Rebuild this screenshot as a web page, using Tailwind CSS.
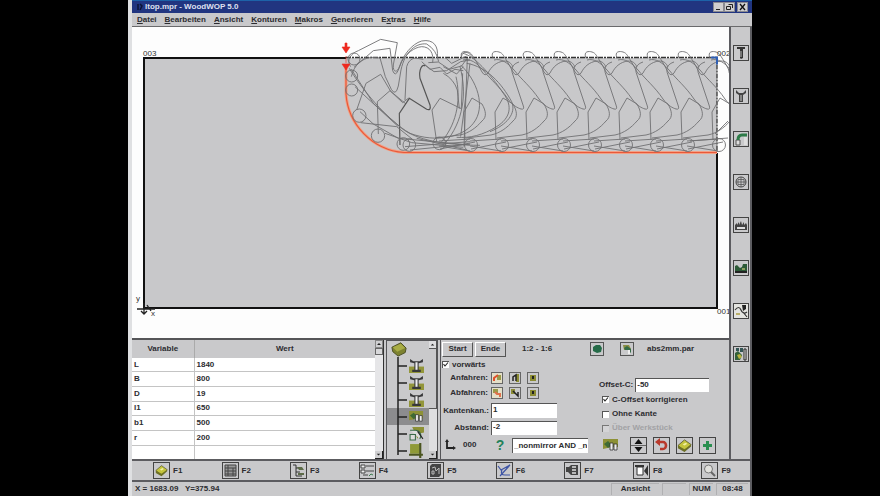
<!DOCTYPE html>
<html lang="de">
<head>
    <meta charset="UTF-8">
    <meta name="viewport" content="width=device-width, initial-scale=1.0">
    <title>ltop.mpr - WoodWOP 5.0</title>
    <script src="https://cdn.jsdelivr.net/npm/@tailwindcss/browser@4"></script>
</head>
<body class="bg-black px-32 font-['Liberation_Sans',Arial,sans-serif] text-[8px] leading-[10px] font-bold text-[#2c2c30]">

    <!-- Shared symbols -->
    <svg class="hidden" aria-hidden="true">
        <symbol id="drill" viewBox="0 0 14 14">
            <path d="M0 8h14v6H0z" fill="#93963a"/>
            <path d="M1 1l3 2h6l3-2v3l-4 1v6h2v2H3v-2h2V5L1 4z" fill="#38383a"/>
            <path d="M6 4h2v7H6z" fill="#eee"/>
        </symbol>
        <symbol id="edge" viewBox="0 0 16 14">
            <path d="M0 1h15v8H9L0 11z" fill="#8d9136"/>
            <path d="M1 6l4-3 4 4-4 3z" fill="#3f6b35"/>
            <path d="M7 5h3v7H7zM11 6h3v6h-3z" fill="#eee" stroke="#333" stroke-width=".8"/>
        </symbol>
        <symbol id="board" viewBox="0 0 16 16">
            <path d="M1 8l7-6 7 5-7 7z" fill="#c4c43c" stroke="#4d4d20" stroke-width=".8"/>
            <path d="M1 8l7 4 7-5v2l-7 6-7-4z" fill="#6d7025"/>
            <path d="M6 7l3-2 2 1-3 2z" fill="#f1efa4"/>
        </symbol>
        <symbol id="up" viewBox="0 0 8 8"><path d="M2 5l2-2 2 2z" fill="#222"/></symbol>
        <symbol id="down" viewBox="0 0 8 8"><path d="M2 3l2 2 2-2z" fill="#222"/></symbol>
        <symbol id="tick" viewBox="0 0 7 7"><path d="M1.500 3.200L3 5l3-3.500" fill="none" stroke="#222" stroke-width="1.100"/></symbol>
    </svg>

    <main class="flex h-screen flex-col border-l-4 border-[#dfe0e2] bg-[#c9c9cb]">

        <header class="flex h-[13px] shrink-0 items-center border-t border-[#1d62a8] bg-[#213580] pr-1 pl-1 text-[#dfe0f0]">
            <svg class="mr-px size-2" viewBox="0 0 8 8"><path d="M2 1v6M4 1l2 2-2 4" stroke="#0d1535" stroke-width="1.500" fill="none"/></svg>
            <h1 class="grow">ltop.mpr - WoodWOP 5.0</h1>
            <button aria-label="Minimieren" class="h-[10px] w-[11px] border border-[#8a8a90] bg-[#d0cfcf]"><svg viewBox="0 0 9 8"><path d="M2 6.500h4" stroke="#222"/></svg></button>
            <button aria-label="Wiederherstellen" class="h-[10px] w-[11px] border border-[#8a8a90] bg-[#d0cfcf]"><svg viewBox="0 0 9 8"><path d="M3.500 1.500h4v3.500M1.500 3.500h4v3h-4z" stroke="#222" fill="none"/></svg></button>
            <button aria-label="Schließen" class="ml-[2px] h-[10px] w-[11px] border border-[#8a8a90] bg-[#d0cfcf]"><svg viewBox="0 0 9 8"><path d="M2 1l5 6M7 1L2 7" stroke="#111" stroke-width="1.300"/></svg></button>
        </header>

        <nav class="flex h-[14px] shrink-0 items-center gap-2 border-b border-[#6a6a6c] pl-[5px]">
            <a href="#"><u>D</u>atei</a>
            <a href="#"><u>B</u>earbeiten</a>
            <a href="#"><u>A</u>nsicht</a>
            <a href="#"><u>K</u>onturen</a>
            <a href="#"><u>M</u>akros</a>
            <a href="#"><u>G</u>enerieren</a>
            <a href="#">E<u>x</u>tras</a>
            <a href="#"><u>H</u>ilfe</a>
        </nav>

        <div class="flex min-h-0 grow">
            <div class="flex min-w-0 grow flex-col">

                <!-- Drawing area -->
                <section class="min-h-0 grow bg-[#fdfdfd]">
                    <svg class="h-full w-full" viewBox="132 27 597 311">
                        <defs>
                            <g id="unit">
                                <path d="M-5 58C-8 51-2 51 1 52C5 53 6 57 9 61L15 72Q18 77 21 73C24 67 29 62 37 61C42 61 44 63 46 67"/>
                                <path d="M-4 60C3 58 10 63 16 70C24 80 33 87 41 99C46 106 51 108 54 109Q58 110 56 105L46 75C43 68 46 64 52 62"/>
                                <path d="M-2 140L-3 112L5 98L15 104C19 111 20 117 15 121C9 128 2 133-7 135L-32 138"/>
                                <path d="M-28 141L3 139M-27 149L8 142M-28 146L3 151"/>
                                <circle cx="4" cy="145" r="6.500"/>
                            </g>
                        </defs>
                        <rect x="144" y="58" width="573" height="250" fill="#c8c8ca"/>
                        <path d="M346 58H144V308H717V153" fill="none" stroke="#111" stroke-width="2"/>
                        <path d="M346 57.500H717V152" fill="none" stroke="#333" stroke-width="1.300" stroke-dasharray="5 1 2 1"/>
                        <path d="M346 65V94C348 124 372 150 404 152.500H717" fill="none" stroke="#f3a084" stroke-width="3"/>
                        <path d="M346 65V94C348 124 372 150 404 152.500H717" fill="none" stroke="#e8593a" stroke-width="1.200"/>
                        <g fill="none" stroke="#707073" stroke-width=".9">
                            <use href="#unit" x="467"/>
                            <use href="#unit" x="498"/>
                            <use href="#unit" x="529"/>
                            <use href="#unit" x="560"/>
                            <use href="#unit" x="591"/>
                            <use href="#unit" x="622"/>
                            <use href="#unit" x="653"/>
                            <use href="#unit" x="684"/>
                            <use href="#unit" x="715"/>
                            <path d="M715 134L728 121M690 141L728 138"/>
                        </g>
                        <!-- entry movement, drawn at three times the size -->
                        <g transform="translate(330 30) scale(.3333)" fill="none" stroke="#6f6f72" stroke-width="2.700">
                            <path d="M62 110C48 92 62 70 85 62L152 28L202 38L190 105C188 128 202 130 209 108C220 75 245 42 275 33C312 26 326 50 322 82"/>
                            <path d="M72 112L130 62L180 55L188 122Q196 142 205 120L215 95C230 70 252 52 275 50C300 50 312 70 308 98"/>
                            <path d="M64 140C72 105 95 85 125 82L150 84L166 140L184 178Q197 200 205 168L213 120C225 62 260 38 290 42Q320 60 326 95"/>
                            <path d="M80 240L108 160L152 133L182 184L228 222M145 312L142 215L180 182L218 218L236 204"/>
                            <path d="M225 210L230 110Q236 88 255 84L280 88"/>
                            <path d="M210 345L208 250L238 205L290 238Q304 243 300 225L270 145C266 120 276 100 286 108" stroke="#555" stroke-width="3.500"/>
                            <path d="M320 335L306 240L330 205L394 236L398 130"/>
                            <path d="M64 118L130 220L215 295C260 330 340 345 450 346"/>
                            <path d="M58 115C90 170 170 270 240 310C320 340 400 320 430 280C470 230 440 150 392 105"/>
                            <path d="M90 245L130 282L205 325L420 345M92 278L200 290L250 330M165 310L245 338L400 352M75 170L205 290"/>
                            <path d="M378 140C392 200 385 275 335 335M390 110C412 190 400 275 345 340M340 130Q372 148 382 180L388 236M412 85L402 350M420 100L392 320"/>
                            <path d="M275 95L300 118L330 112L350 132L375 118L400 122M285 105L312 125L350 122L392 95L420 90M295 98L325 96L358 118L395 108L412 84M340 110L380 132L400 110M345 82L365 100L410 78"/>
                            <path d="M398 70C430 75 480 130 520 190C550 230 540 265 500 290C460 315 420 325 380 322M410 100C470 110 515 160 545 215C560 250 530 285 480 305"/>
                            <path d="M225 350L420 335M240 360L420 342M260 325L410 360"/>
                            <circle cx="72" cy="87" r="18"/>
                            <circle cx="65" cy="138" r="18"/>
                            <circle cx="65" cy="180" r="18"/>
                            <circle cx="88" cy="257" r="20"/>
                            <circle cx="144" cy="317" r="20"/>
                            <circle cx="220" cy="342" r="19"/>
                            <circle cx="238" cy="345" r="19"/>
                            <circle cx="328" cy="340" r="19"/>
                            <path d="M395 85C392 60 420 62 428 85"/>
                        </g>
                        <path d="M345 43h2v4h3l-4 6-4-6h3zM346 56v7M342 64h8l-4 6z" fill="#ee2a20" stroke="#ee2a20" stroke-width=".6"/>
                        <path d="M711 57.500h6v7" fill="none" stroke="#2e5fb4" stroke-width="2"/>
                        <path d="M137 309h18M144 303v10M141 311l3 3 3-3M147 305l4 6" fill="none" stroke="#222" stroke-width="1.300"/>
                        <g fill="#333" font-size="8" font-weight="400">
                            <text x="143" y="56">003</text>
                            <text x="717" y="56">002</text>
                            <text x="717" y="314">001</text>
                            <text x="136" y="301">y</text>
                            <text x="151" y="316">x</text>
                        </g>
                    </svg>
                </section>

                <div class="flex h-[121px] shrink-0 border-t-2 border-[#555558]">

                    <!-- Variables -->
                    <table class="h-full grow border-collapse bg-white">
                        <thead>
                            <tr class="h-[18px] bg-[#c9c9cb]"><th class="w-[62px] border-r border-[#aaa]">Variable</th><th>Wert</th></tr>
                        </thead>
                        <tbody>
                            <tr class="border-b border-[#c4c4c4]"><td class="border-r border-[#c4c4c4] pl-[2px]">L</td><td class="pl-[2px]">1840</td></tr>
                            <tr class="border-b border-[#c4c4c4]"><td class="border-r border-[#c4c4c4] pl-[2px]">B</td><td class="pl-[2px]">800</td></tr>
                            <tr class="border-b border-[#c4c4c4]"><td class="border-r border-[#c4c4c4] pl-[2px]">D</td><td class="pl-[2px]">19</td></tr>
                            <tr class="border-b border-[#c4c4c4]"><td class="border-r border-[#c4c4c4] pl-[2px]">l1</td><td class="pl-[2px]">650</td></tr>
                            <tr class="border-b border-[#c4c4c4]"><td class="border-r border-[#c4c4c4] pl-[2px]">b1</td><td class="pl-[2px]">500</td></tr>
                            <tr class="border-b border-[#c4c4c4]"><td class="border-r border-[#c4c4c4] pl-[2px]">r</td><td class="pl-[2px]">200</td></tr>
                            <tr><td class="h-[14px] border-r border-[#c4c4c4]"></td><td></td></tr>
                        </tbody>
                    </table>
                    <div class="flex w-[9px] shrink-0 flex-col border-r border-[#333] bg-[#e6e6e8]">
                        <button aria-label="Nach oben" class="size-2 border border-[#888] bg-[#d0d0d2]"><svg viewBox="1 1 6 6"><use href="#up" width="8" height="8"/></svg></button>
                        <div class="h-[7px] border border-[#666] bg-[#d8d8da]"></div>
                        <button aria-label="Nach unten" class="mt-auto size-2 border-r border-b border-[#222] bg-[#d0d0d2]"><svg viewBox="0 0 8 8"><use href="#down" width="8" height="8"/></svg></button>
                    </div>

                    <!-- Operation tree -->
                    <div class="ml-[2px] flex w-[52px] shrink-0 border-x border-t border-[#555558]">
                        <div class="flex grow flex-col">
                            <svg class="ml-1 h-4 w-4 shrink-0" viewBox="0 0 18 18"><path d="M1 7L11 2l6 6-1 5-8 4-6-5z" fill="#7d8230" stroke="#44471d"/><path d="M2 7l9-4 5 5-9 4z" fill="#a9ad45"/></svg>
                            <ul class="flex min-h-0 grow flex-col">
                                <li class="flex h-[17px] items-center"><svg class="h-full w-[22px]" viewBox="0 0 22 17"><path d="M11 0v17M11 9h9" stroke="#222" stroke-width="1.500"/></svg><svg class="size-[15px]"><use href="#drill"/></svg></li>
                                <li class="flex h-[17px] items-center"><svg class="h-full w-[22px]" viewBox="0 0 22 17"><path d="M11 0v17M11 9h9" stroke="#222" stroke-width="1.500"/></svg><svg class="size-[15px]"><use href="#drill"/></svg></li>
                                <li class="flex h-[17px] items-center"><svg class="h-full w-[22px]" viewBox="0 0 22 17"><path d="M11 0v17M11 9h9" stroke="#222" stroke-width="1.500"/></svg><svg class="size-[15px]"><use href="#drill"/></svg></li>
                                <li class="flex h-[17px] items-center bg-[#8c8c8e]"><svg class="h-full w-[22px]" viewBox="0 0 22 17"><path d="M11 0v17M11 9h9" stroke="#222" stroke-width="1.500"/></svg><svg class="size-[15px]"><use href="#edge"/></svg></li>
                                <li class="flex h-[17px] items-center"><svg class="h-full w-[22px]" viewBox="0 0 22 17"><path d="M11 0v17M11 9h9" stroke="#222" stroke-width="1.500"/></svg><svg class="size-[15px]" viewBox="0 0 14 14"><path d="M3 1h11v5l-4 1-2 5z" fill="#8d9136"/><path d="M1 4h5a5 5 0 0 1 4 8M1 8h5v5H1z" fill="#ddd" stroke="#3a6a48"/><path d="M8 5l5 7" stroke="#222"/></svg></li>
                                <li class="flex h-[17px] items-center"><svg class="h-full w-[22px]" viewBox="0 0 22 17"><path d="M11 0v13M11 9h9" stroke="#222" stroke-width="1.500"/></svg><svg class="size-[15px]" viewBox="0 0 14 14"><path d="M1 1h9v9H1z" fill="#8f9a38"/><path d="M0 11h13M10.500 0v14" stroke="#4b5520" stroke-width="2"/></svg></li>
                            </ul>
                        </div>
                        <div class="flex w-2 shrink-0 flex-col bg-[#dedee0]">
                            <button aria-label="Nach oben" class="size-2 border-r border-b border-[#555]"><svg viewBox="0 0 8 8"><use href="#up" width="8" height="8"/></svg></button>
                            <div class="h-[60px] border-r border-b border-[#555] bg-[#c9c9cb]"></div>
                            <button aria-label="Nach unten" class="mt-auto size-2 border-r border-b border-[#222] bg-[#c9c9cb]"><svg viewBox="0 0 8 8"><use href="#down" width="8" height="8"/></svg></button>
                        </div>
                    </div>

                    <!-- Parameters of the selected operation -->
                    <form class="ml-[2px] flex w-[289px] shrink-0 flex-col border-l border-[#555558] pt-px pl-px">
                        <div class="flex h-[16px] shrink-0 items-center">
                            <button type="button" class="h-[15px] w-[31px] border border-t-white border-r-[#555] border-b-[#555] border-l-white">Start</button>
                            <button type="button" class="ml-[2px] h-[15px] w-[31px] border border-t-white border-r-[#555] border-b-[#555] border-l-white">Ende</button>
                            <span class="ml-[16px] w-[68px]">1:2 - 1:6</span>
                            <button type="button" aria-label="Werkzeug" class="size-[14px] border border-[#555]"><svg viewBox="0 0 12 12"><path d="M2 4l3-2h4l2 3-1 4-4 1-4-2z" fill="#256b48"/></svg></button>
                            <button type="button" aria-label="Datei laden" class="ml-4 size-[14px] border border-[#555]"><svg viewBox="0 0 12 12"><path d="M2 2h6l2 4-3 1-4 0z" fill="#8a8c42"/><path d="M3 5l3-2 4 3v4L7 7H4z" fill="#336b46"/><path d="M7 7h2v4H7z" fill="#eee"/></svg></button>
                            <span class="ml-[13px]">abs2mm.par</span>
                        </div>

                        <div class="flex grow">
                            <div class="flex w-[115px] flex-col pt-px">
                                <label class="flex h-[13px] items-center gap-[3px]">
                                    <span class="grid"><input type="checkbox" checked class="col-start-1 row-start-1 size-[7px] appearance-none border-t border-l border-[#555] bg-white"><svg class="pointer-events-none col-start-1 row-start-1 size-[7px]"><use href="#tick"/></svg></span>
                                    vorwärts
                                </label>
                                <div class="flex h-[14px] items-center">
                                    <span class="w-[46px] text-right">Anfahren:</span>
                                    <div class="ml-[3px] flex gap-[6px]">
                                        <button type="button" aria-label="Anfahren seitlich" class="size-[12px] border border-[#666] bg-[#e4dfc8]"><svg viewBox="0 0 10 10"><path d="M5 2h4v5H5z" fill="#9a9a4a"/><path d="M2 8V5l4-3" stroke="#e0512c" stroke-width="2" fill="none"/></svg></button>
                                        <button type="button" aria-label="Anfahren gerade" class="size-[12px] border border-[#666]"><svg viewBox="0 0 10 10"><path d="M6 1h3v8H6z" fill="#8c8c34"/><path d="M3 8V4l3-2v6" stroke="#222" stroke-width="1.500" fill="none"/></svg></button>
                                        <button type="button" aria-label="Anfahren von oben" class="size-[12px] border border-[#666]"><svg viewBox="0 0 10 10"><path d="M2 2h6v6H2z" fill="#8c8c34"/><path d="M4 3h2v3H4z" fill="#222"/></svg></button>
                                    </div>
                                </div>
                                <div class="flex h-[15px] items-center">
                                    <span class="w-[46px] text-right">Abfahren:</span>
                                    <div class="ml-[3px] flex gap-[6px]">
                                        <button type="button" aria-label="Abfahren seitlich" class="size-[12px] border border-[#666] bg-[#e4dfc8]"><svg viewBox="0 0 10 10"><path d="M1 1h5v4H1z" fill="#9a9a4a"/><path d="M3 4l2 2h3v3" stroke="#e0714c" stroke-width="2" fill="none"/></svg></button>
                                        <button type="button" aria-label="Abfahren gerade" class="size-[12px] border border-[#666]"><svg viewBox="0 0 10 10"><path d="M1 1h4v5H1z" fill="#8c8c34"/><path d="M3 3l5 5V4" stroke="#222" stroke-width="1.500" fill="none"/></svg></button>
                                        <button type="button" aria-label="Abfahren nach oben" class="size-[12px] border border-[#666]"><svg viewBox="0 0 10 10"><path d="M2 2h6v6H2z" fill="#8c8c34"/><path d="M4 3h2v3H4z" fill="#222"/></svg></button>
                                    </div>
                                </div>
                                <div class="mt-[3px] flex h-[15px] items-center justify-between">
                                    <label for="kante" class="w-[47px] text-right">Kantenkan.:</label>
                                    <input id="kante" type="text" value="1" class="h-[15px] w-[66px] border-t border-l border-[#555] bg-white px-px pb-[3px]">
                                </div>
                                <div class="mt-[2px] flex h-[15px] items-center justify-between">
                                    <label for="abstand" class="w-[47px] text-right">Abstand:</label>
                                    <input id="abstand" type="text" value="-2" class="h-[14px] w-[66px] border-t border-l border-[#555] bg-white px-px pb-[3px]">
                                </div>
                            </div>

                            <div class="ml-[42px] flex flex-col pt-[21px]">
                                <div class="flex h-[14px] items-center gap-[2px]">
                                    <label for="offset">Offset-C:</label>
                                    <input id="offset" type="text" value="-50" class="h-[14px] w-[74px] border-t border-l border-[#555] bg-white px-px pb-[2px]">
                                </div>
                                <div class="flex flex-col pl-[3px]">
                                    <label class="flex h-[15px] items-center gap-[3px]">
                                        <span class="grid"><input type="checkbox" checked class="col-start-1 row-start-1 size-[7px] appearance-none border-t border-l border-[#555] bg-white"><svg class="pointer-events-none col-start-1 row-start-1 size-[7px]"><use href="#tick"/></svg></span>
                                        C-Offset korrigieren
                                    </label>
                                    <label class="flex h-[14px] items-center gap-[3px]"><input type="checkbox" class="size-[7px] appearance-none border-t border-l border-[#555] bg-white">Ohne Kante</label>
                                    <label class="flex h-[14px] items-center gap-[3px] text-[#a2a2a5]"><input type="checkbox" disabled class="size-[7px] appearance-none border-t border-l border-[#777] bg-[#d4d4d6]">Über Werkstück</label>
                                </div>
                            </div>
                        </div>

                        <div class="mb-[5px] flex h-[18px] shrink-0 items-center">
                            <svg class="ml-[2px] h-3 w-3" viewBox="0 0 12 12"><path d="M3 2v7h7" fill="none" stroke="#222" stroke-width="1.800"/><path d="M3 0l2 3H1zM12 9L9 7v4z" fill="#222"/></svg>
                            <span class="ml-[7px] w-[32px]">000</span>
                            <button type="button" aria-label="Hilfe" class="w-[10px] text-[14px] leading-4 text-[#23825a]">?</button>
                            <input aria-label="Bedingung" type="text" value="_nonmirror AND _nonmirror" class="ml-[7px] h-[15px] w-[76px] border-t border-l border-[#555] bg-white px-px">
                            <svg class="ml-[15px] h-4 w-4"><use href="#edge"/></svg>
                            <div class="ml-[11px] flex gap-[6px]">
                                <button type="button" aria-label="Auf und ab" class="size-[17px] border border-[#444]"><svg viewBox="0 0 15 15"><path d="M0 7.500h15" stroke="#666"/><path d="M3.500 6l4-5 4 5zM3.500 9h8l-4 5z" fill="#111"/></svg></button>
                                <button type="button" aria-label="Rückgängig" class="size-[17px] border border-[#444]"><svg viewBox="0 0 15 15"><path d="M4 4h5a3 3.500 0 0 1 0 7H6" fill="none" stroke="#b93a2c" stroke-width="2.600"/><path d="M6 0v8L1 4z" fill="#b93a2c"/></svg></button>
                                <button type="button" aria-label="Übernehmen" class="size-[17px] border border-[#444]"><svg viewBox="0 0 16 16"><use href="#board" width="16" height="16"/></svg></button>
                                <button type="button" aria-label="Hinzufügen" class="size-[17px] border border-[#444]"><svg viewBox="0 0 15 15"><path d="M7.500 3v9M3 7.500h9" stroke="#2a8f50" stroke-width="3"/></svg></button>
                            </div>
                        </div>
                    </form>
                </div>
            </div>

            <!-- Macro toolbar -->
            <aside class="flex w-[23px] shrink-0 flex-col items-center gap-[27px] border-x-2 border-[#5c5c60] pt-[18px]">
                <button aria-label="Bohren vertikal" class="h-4 w-4 border border-[#444]"><svg viewBox="0 0 14 14"><path d="M3 1h8v2H9v9l-2 1-1-1V3H3z" fill="#333"/><path d="M7 5v6" stroke="#bbb"/></svg></button>
                <button aria-label="Bohren horizontal" class="h-4 w-4 border border-[#444]"><svg viewBox="0 0 14 14"><path d="M2 1l3 3h4l3-3v3L9 6v7H5V6L2 4z" fill="#444"/><path d="M7 6v6" stroke="#ccc"/></svg></button>
                <button aria-label="Fräsen" class="h-4 w-4 border border-[#444]"><svg viewBox="0 0 14 14"><path d="M2 13V8h4v5z" fill="#ddd" stroke="#555"/><path d="M4 8q0-5 4-5h5" fill="none" stroke="#2d7b48" stroke-width="3"/><path d="M10 5h3v8h-3z" fill="#ddd"/></svg></button>
                <button aria-label="Tasche" class="h-4 w-4 border border-[#444]"><svg viewBox="0 0 14 14"><circle cx="7" cy="7" r="5" fill="none" stroke="#444"/><path d="M7 2v10M2 7h10M4 4.500h6v5H4z" fill="none" stroke="#555" stroke-width=".8"/></svg></button>
                <button aria-label="Sägen" class="h-4 w-4 border border-[#444]"><svg viewBox="0 0 14 14"><path d="M1 12V7l2-2v2l2-3v3l2-4 1 4 2-3v3l2-2 1 2v5z" fill="#444"/><path d="M3 10h8" stroke="#ddd" stroke-width="2"/></svg></button>
                <button aria-label="Kante anleimen" class="h-4 w-4 border border-[#444]"><svg viewBox="0 0 14 14"><path d="M1 11V5l2-1 3 3 2-1 1-3h4v8z" fill="#2c5a37"/><path d="M1 11h12" stroke="#222" stroke-width="2"/><path d="M8 7h3v2H8z" fill="#90a060"/></svg></button>
                <button aria-label="Kappen" class="h-4 w-4 border border-[#444] bg-[#e4e4e0]"><svg viewBox="0 0 14 14"><path d="M1 6q4-5 6 0t6 2M9 8l4 5" fill="none" stroke="#333" stroke-width="1.200"/><path d="M8 1h4v4l-3 2z" fill="#222"/><path d="M2 9h4v2H2z" fill="#bbb06a"/></svg></button>
                <button aria-label="Weitere Makros" class="h-4 w-4 border border-[#444]"><svg viewBox="0 0 14 14"><path d="M1 6l3-2 4 4-2 5H1z" fill="#33603a"/><path d="M3 8l3-1 2 3-3 2z" fill="#b9b33e"/><path d="M2 1h3v3H2zM6 1h3v4H6z" fill="#355"/><path d="M10 2h2v11h-2z" fill="#eee" stroke="#222"/></svg></button>
            </aside>
        </div>

        <!-- Function keys -->
        <div class="grid h-[23px] shrink-0 grid-cols-9 items-center border-y-2 border-r-2 border-[#5c5c60] pl-px">
            <button class="flex items-center gap-[3px] pl-[20px]"><svg class="size-[17px] border border-[#444] p-px"><use href="#board"/></svg>F1</button>
            <button class="flex items-center gap-[3px] pl-[20px]"><svg class="size-[17px] border border-[#444]" viewBox="0 0 15 15"><path d="M2 2h11v11H2z" fill="#999" stroke="#444"/><path d="M2 5h11M2 8h11M2 11h11M5 2v11M10 5v8" stroke="#444"/></svg>F2</button>
            <button class="flex items-center gap-[3px] pl-[20px]"><svg class="size-[17px] border border-[#444]" viewBox="0 0 15 15"><path d="M2 2h3v3h3M5 5v8h6M5 9h4" fill="none" stroke="#333"/><path d="M6 4h5l2 3H8zM7 10h6v2H7z" fill="#5c6b48"/></svg>F3</button>
            <button class="flex items-center gap-[3px] pl-[20px]"><svg class="size-[17px] border border-[#444]" viewBox="0 0 15 15"><path d="M1 2h4v3H1zM1 7h4v3H1zM6 3h8M6 8h8M3 12h5" fill="#eee" stroke="#444"/><path d="M9 13l2-2 2 1" fill="none" stroke="#3b7a4b"/></svg>F4</button>
            <button class="flex items-center gap-[3px] pl-[20px]"><svg class="size-[17px] border border-[#444]" viewBox="0 0 15 15"><path d="M2 3l2-2h9v11l-2 2H2z" fill="#444"/><path d="M4 5l3-1 1 4 3-3v6M4 8h2v3H4z" fill="none" stroke="#bbb"/></svg>F5</button>
            <button class="flex items-center gap-[3px] pl-[20px]"><svg class="size-[17px] border border-[#444]" viewBox="0 0 15 15"><path d="M1 3l3 4 9-5M3 13L13 2M5 7q-2 5 3 5h5" fill="none" stroke="#3d54a5" stroke-width="1.200"/></svg>F6</button>
            <button class="flex items-center gap-[3px] pl-[20px]"><svg class="size-[17px] border border-[#444]" viewBox="0 0 15 15"><path d="M1 4h3l2-2h7v10H6l-3-3H1z" fill="#444"/><path d="M7 4h4M7 7h4M7 10h4" stroke="#ddd" stroke-width="1.300"/></svg>F7</button>
            <button class="flex items-center gap-[3px] pl-[20px]"><svg class="size-[17px] border border-[#444]" viewBox="0 0 15 15"><path d="M3 4h6v8H3z" fill="#fff" stroke="#333"/><path d="M1 2h9v2H1zM14 2v11l-4-5z" fill="#333"/></svg>F8</button>
            <button class="flex items-center gap-[3px] pl-[20px]"><svg class="size-[17px] border border-[#444]" viewBox="0 0 15 15"><circle cx="6.500" cy="6" r="4" fill="#e2e2de" stroke="#777"/><path d="M9 9l4 4" stroke="#666" stroke-width="2"/></svg>F9</button>
        </div>

        <footer class="flex h-[14px] shrink-0 items-center gap-[3px] border-r-2 border-[#5c5c60] pr-[2px] pl-[3px]">
            <span class="grow whitespace-pre">X = 1683.09   Y=375.94</span>
            <span class="h-3 w-[48px] border-t border-l border-[#b0b0b2] text-center">Ansicht</span>
            <span class="h-3 w-[24px] border-t border-l border-[#b0b0b2]"></span>
            <span class="h-3 w-[24px] border-t border-l border-[#b0b0b2] text-center">NUM</span>
            <span class="h-3 w-[32px] border-t border-l border-[#b0b0b2] text-center">08:48</span>
        </footer>
    </main>
</body>
</html>
